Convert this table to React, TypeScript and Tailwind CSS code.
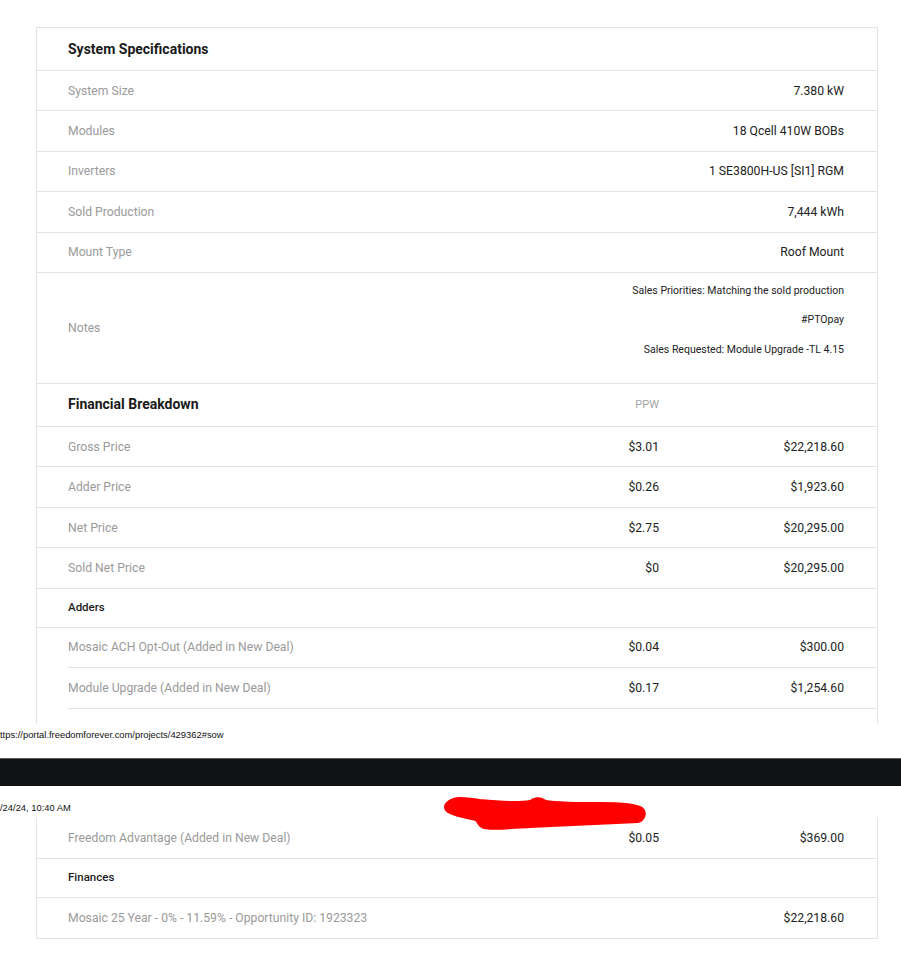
import React from "react";

const F = { fontFamily: "Roboto, 'Liberation Sans', Arial, sans-serif" };

function SpecRow({ label, value, h = "h-[40.4px]" }: { label: string; value: string; h?: string }) {
  return (
    <div className={`${h} flex items-center justify-between border-b border-[#e3e3e3] pl-[31px] pr-[33px]`}>
      <span className="text-[12.2px] text-[#9a9a9a]">{label}</span>
      <span className="text-[12.2px] text-[#222]">{value}</span>
    </div>
  );
}

function FinRow({
  label,
  ppw,
  value,
  h = "h-[40.5px]",
  inset = false,
}: {
  label: string;
  ppw?: string;
  value: string;
  h?: string;
  inset?: boolean;
}) {
  return (
    <div className={inset ? "pl-[31px]" : ""}>
      <div
        className={`${h} flex items-center border-b border-[#e3e3e3] ${inset ? "" : "pl-[31px]"} pr-[33px]`}
      >
        <span className="flex-1 text-[12.2px] text-[#9a9a9a]">{label}</span>
        <span className="w-[120px] text-right text-[12.2px] text-[#222]">{ppw ?? ""}</span>
        <span className="w-[185px] text-right text-[12.2px] text-[#222]">{value}</span>
      </div>
    </div>
  );
}

function SubHead({ title, h }: { title: string; h: string }) {
  return (
    <div className={`${h} flex items-center border-b border-[#e3e3e3] pl-[31px]`}>
      <span className="text-[11.5px] font-medium text-[#1c1c1c]">{title}</span>
    </div>
  );
}

export default function App() {
  return (
    <div className="w-[901px] h-[972px] bg-white overflow-hidden" style={F}>
      {/* top capture */}
      <div className="h-[724px] overflow-hidden pt-[27px]">
        <div className="ml-[36px] w-[842px] border-x border-t border-[#e3e3e3] h-[720px]">
          <div className="h-[43px] flex items-center border-b border-[#e3e3e3] pl-[31px]">
            <span className="text-[14px] font-bold text-[#1a1a1a]">System Specifications</span>
          </div>
          <SpecRow label="System Size" value="7.380 kW" />
          <SpecRow label="Modules" value="18 Qcell 410W BOBs" />
          <SpecRow label="Inverters" value="1 SE3800H-US [SI1] RGM" />
          <SpecRow label="Sold Production" value="7,444 kWh" />
          <SpecRow label="Mount Type" value="Roof Mount" />
          <div className="h-[111px] flex items-center justify-between border-b border-[#e3e3e3] pl-[31px] pr-[33px]">
            <span className="text-[12.2px] text-[#9a9a9a]">Notes</span>
            <div className="self-start pt-[11px] flex flex-col items-end gap-[15.5px] text-[10.5px] leading-[14px] text-[#222]">
              <span>Sales Priorities: Matching the sold production</span>
              <span>#PTOpay</span>
              <span>Sales Requested: Module Upgrade -TL 4.15</span>
            </div>
          </div>
          <div className="h-[43px] flex items-center border-b border-[#e3e3e3] pl-[31px] pr-[33px]">
            <span className="flex-1 text-[14px] font-bold text-[#1a1a1a]">Financial Breakdown</span>
            <span className="w-[120px] text-right text-[11px] text-[#a5a5a5]">PPW</span>
            <span className="w-[185px]" />
          </div>
          <FinRow label="Gross Price" ppw="$3.01" value="$22,218.60" />
          <FinRow label="Adder Price" ppw="$0.26" value="$1,923.60" />
          <FinRow label="Net Price" ppw="$2.75" value="$20,295.00" />
          <FinRow label="Sold Net Price" ppw="$0" value="$20,295.00" />
          <SubHead title="Adders" h="h-[39px]" />
          <FinRow label="Mosaic ACH Opt-Out (Added in New Deal)" ppw="$0.04" value="$300.00" h="h-[40px]" inset />
          <FinRow label="Module Upgrade (Added in New Deal)" ppw="$0.17" value="$1,254.60" h="h-[41px]" inset />
        </div>
      </div>

      {/* print footer url */}
      <div className="h-[34px] pt-[5px]">
        <span
          className="block text-[9.4px] leading-[12px] text-[#111]"
          style={{ fontFamily: "'Liberation Sans', Arial, sans-serif" }}
        >
          ttps://portal.freedomforever.com/projects/429362#sow
        </span>
      </div>

      {/* black gap */}
      <div className="h-[28px] bg-[#111215] border-t border-[#5a5a5a]" />

      {/* second capture */}
      <div className="relative">
        <div className="h-[32px] pt-[16px]">
          <span
            className="block text-[9.4px] leading-[12px] text-[#111]"
            style={{ fontFamily: "'Liberation Sans', Arial, sans-serif" }}
          >
            /24/24, 10:40 AM
          </span>
        </div>
        <svg className="absolute left-[440px] top-[6px] z-10" width="212" height="44" viewBox="0 0 212 44">
          <path
            d="M 8 10 C 14 4, 26 6, 40 8 C 60 10, 78 11, 90 9 C 94 6, 100 5, 104 8 C 108 11, 130 11, 160 11 C 180 11, 196 12, 202 16 C 207 20, 205 28, 198 30 C 170 31, 130 33, 90 35 C 70 36, 52 38, 44 36 C 38 34, 38 30, 36 28 C 26 26, 14 24, 8 20 C 4 17, 4 13, 8 10 Z"
            fill="#ff0000"
            stroke="#ff0000"
            strokeWidth="2"
            strokeLinejoin="round"
          />
        </svg>
        <div className="ml-[36px] w-[842px] border-x border-b border-[#e3e3e3]">
          <FinRow label="Freedom Advantage (Added in New Deal)" ppw="$0.05" value="$369.00" h="h-[41px]" />
          <SubHead title="Finances" h="h-[39px]" />
          <div className="h-[40px] flex items-center justify-between pl-[31px] pr-[33px]">
            <span className="text-[12.2px] text-[#9a9a9a]">Mosaic 25 Year - 0% - 11.59% - Opportunity ID: 1923323</span>
            <span className="text-[12.2px] text-[#222]">$22,218.60</span>
          </div>
        </div>
      </div>
    </div>
  );
}
